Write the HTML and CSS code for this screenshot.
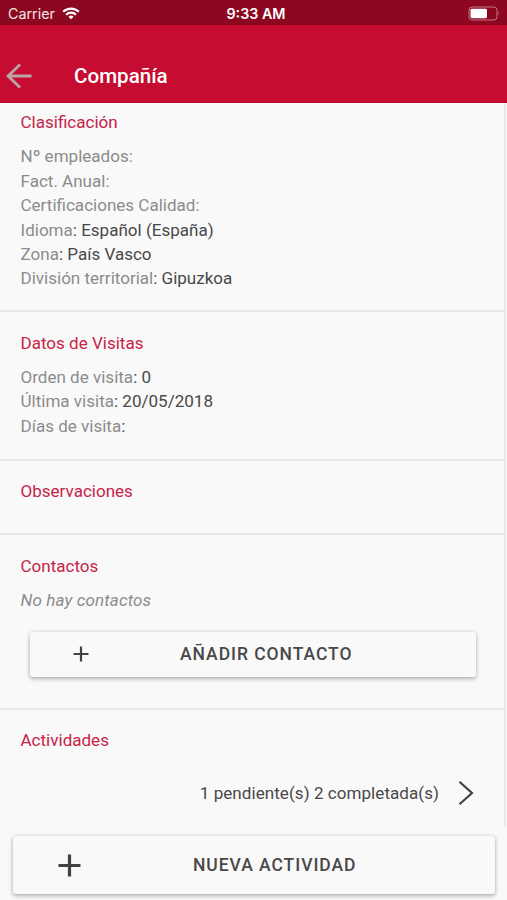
FILE: index.html
```html
<!DOCTYPE html>
<html lang="es">
<head>
<meta charset="utf-8">
<title>Compañía</title>
<link rel="stylesheet" href="styles.css">
</head>
<body>
<div class="status">
  <div class="carrier"><span>Carrier</span>
    <svg width="18" height="13" viewBox="0 0 18 13" fill="none" stroke="#fff" stroke-width="2.2"><path d="M1.2 4.8a11 11 0 0 1 15.6 0M4.1 7.7a7 7 0 0 1 9.8 0"/><path d="M9 12.2 6.4 9.7a3.7 3.7 0 0 1 5.2 0z" fill="#fff" stroke="none"/></svg>
  </div>
  <span class="time">9:33 AM</span>
  <svg class="battery" width="33" height="15" viewBox="0 0 33 15"><rect x="1" y="1" width="28" height="13" rx="3.2" fill="none" stroke="#c57487"/><rect x="2.5" y="2.8" width="16.5" height="9.4" rx="1.4" fill="#fff"/><path d="M30.5 5.3q1.8 2.2 0 4.4z" fill="#c57487"/></svg>
</div>
<header class="toolbar">
  <svg class="back" width="28" height="28" viewBox="0 0 28 28" fill="none" stroke="#b9a6a8" stroke-width="2.8"><path d="M26.5 14H3M15 2.4 3 14l12 11.6"/></svg>
  <h1>Compañía</h1>
</header>
<main class="content">
  <section>
    <h2>Clasificación</h2>
    <p class="off">Nº empleados:</p>
    <p class="off">Fact. Anual:</p>
    <p class="off">Certificaciones Calidad:</p>
    <p><span class="off">Idioma</span>: Español (España)</p>
    <p><span class="off">Zona</span>: País Vasco</p>
    <p><span class="off">División territorial</span>: Gipuzkoa</p>
  </section>
  <section class="visits">
    <h2>Datos de Visitas</h2>
    <p><span class="off">Orden de visita</span>: 0</p>
    <p><span class="off">Última visita</span>: 20/05/2018</p>
    <p><span class="off">Días de visita</span>:</p>
  </section>
  <section class="notes">
    <h2>Observaciones</h2>
  </section>
  <section class="contacts">
    <h2>Contactos</h2>
    <p class="empty">No hay contactos</p>
    <button class="btn">
      <svg width="16" height="16" viewBox="0 0 16 16" stroke="#424242" stroke-width="2.2"><path d="M8 .5v15M.5 8h15"/></svg>
      <span>AÑADIR CONTACTO</span>
    </button>
  </section>
  <section class="activities">
    <h2>Actividades</h2>
    <div class="summary"><span>1 pendiente(s) 2 completada(s)</span>
      <svg width="16" height="26" viewBox="0 0 16 26" fill="none" stroke="#424242" stroke-width="2.2"><path d="M1.5 1.8 14 13 1.5 24.2"/></svg>
    </div>
  </section>
</main>
<footer>
  <button class="btn large">
    <svg width="23" height="23" viewBox="0 0 23 23" stroke="#424242" stroke-width="3.2"><path d="M11.5 .5v22M.5 11.5h22"/></svg>
    <span>NUEVA ACTIVIDAD</span>
  </button>
</footer>
</body>
</html>
```
FILE: styles.css
```css
* { box-sizing: border-box; }
body {
  margin: 0;
  height: 900px;
  display: flex;
  flex-direction: column;
  overflow: hidden;
  background: #f9f9f9;
  color: #484848;
  font: 17.05px/24.4px Roboto, sans-serif;
}
h1, h2, p { margin: 0; }
.status {
  height: 25px;
  flex: none;
  display: grid;
  grid-template-columns: 1fr auto 1fr;
  align-items: center;
  padding: 2px 6px 0 8px;
  background: #8b0820;
  color: #fff;
  font: 14.3px/20px Inter, sans-serif;
}
.carrier { display: flex; align-items: center; gap: 7px; color: #f5e4e7; }
.time { padding-left: 3px; font-weight: 600; }
.battery { justify-self: end; }
.toolbar {
  height: 78px;
  flex: none;
  display: flex;
  align-items: center;
  padding: 24px 5px 0;
  background: #c60c30;
  border-bottom: 1px solid #b00b2b;
  color: #fff;
}
.toolbar h1 { margin-left: 41px; font-size: 20.6px; font-weight: 500; line-height: 28px; }
.content {
  height: 723px;
  flex: none;
  margin-right: 1px;
  border-right: 2px solid #e9e9e9;
}
section {
  padding: 19px 20px 19.6px 20.5px;
  border-bottom: 2px solid #e8e8e8;
}
section:first-child { padding-top: 7px; }
h2 {
  margin-bottom: 10px;
  color: #c72348;
  font-size: 17.05px;
  font-weight: 400;
  line-height: 24.4px;
}
.off { color: #8c8c8c; }
.visits { height: 148.5px; padding-top: 18.5px; }
.visits h2 { margin-bottom: 9.5px; }
.notes { height: 74.5px; padding-top: 18.5px; }
.contacts { height: 174.5px; padding-top: 18.5px; }
.empty { color: #8c8c8c; font-style: italic; letter-spacing: .12px; }
.btn {
  display: flex;
  align-items: center;
  width: 446px;
  height: 45px;
  margin: 19px 0 0 9.5px;
  padding: 0 0 0 43px;
  border: 0;
  border-radius: 3px;
  background: #f9f9f9;
  box-shadow: 0 2px 4px rgba(0,0,0,.25), 0 0 4px rgba(0,0,0,.12);
  color: #484848;
  font: 500 17.5px/24px Roboto, sans-serif;
  letter-spacing: .95px;
}
.btn span { margin-left: 91px; }
.activities { border: 0; padding-top: 18.5px; }
.summary {
  display: flex;
  align-items: center;
  justify-content: flex-end;
  gap: 19px;
  margin: 27px 10px 0 0;
  letter-spacing: .05px;
}
footer { padding: 10px 12px 0 13px; }
.btn.large { width: 482px; height: 58px; margin: 0; padding-left: 45px; }
.btn.large span { margin-left: 112px; }
```
